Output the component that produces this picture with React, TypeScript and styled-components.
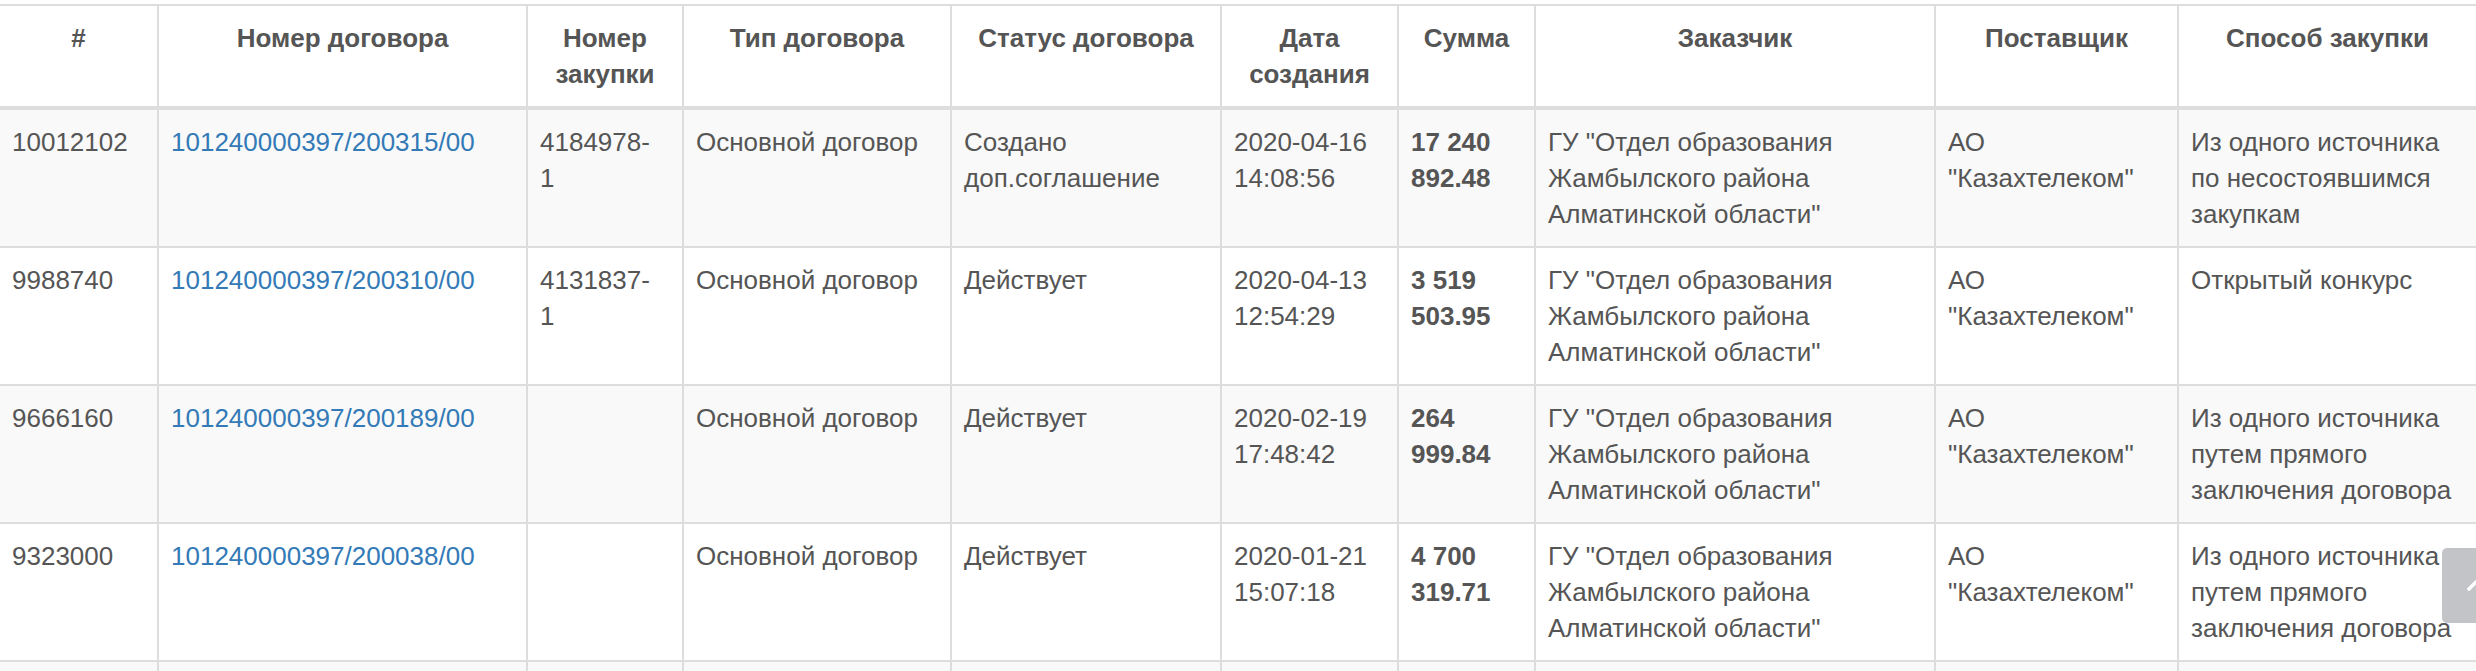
import { FC } from 'react';
import styled, { createGlobalStyle } from 'styled-components';

interface IContract {
  id: string;
  number: string;
  purchase: string;
  type: string;
  status: string;
  created: string;
  sum: string;
  customer: string;
  supplier: string;
  method: string;
}

interface IColumn {
  title: string;
  width: number;
}

const COLUMNS: IColumn[] = [
  { title: '#', width: 158 },
  { title: 'Номер договора', width: 369 },
  { title: 'Номер закупки', width: 156 },
  { title: 'Тип договора', width: 268 },
  { title: 'Статус договора', width: 270 },
  { title: 'Дата создания', width: 177 },
  { title: 'Сумма', width: 137 },
  { title: 'Заказчик', width: 400 },
  { title: 'Поставщик', width: 243 },
  { title: 'Способ закупки', width: 298 },
];

const CUSTOMER = 'ГУ "Отдел образования Жамбылского района Алматинской области"';
const SUPPLIER = 'АО "Казахтелеком"';

const CONTRACTS: IContract[] = [
  {
    id: '10012102',
    number: '101240000397/200315/00',
    purchase: '4184978-1',
    type: 'Основной договор',
    status: 'Создано доп.соглашение',
    created: '2020-04-16 14:08:56',
    sum: '17 240 892.48',
    customer: CUSTOMER,
    supplier: SUPPLIER,
    method: 'Из одного источника по несостоявшимся закупкам',
  },
  {
    id: '9988740',
    number: '101240000397/200310/00',
    purchase: '4131837-1',
    type: 'Основной договор',
    status: 'Действует',
    created: '2020-04-13 12:54:29',
    sum: '3 519 503.95',
    customer: CUSTOMER,
    supplier: SUPPLIER,
    method: 'Открытый конкурс',
  },
  {
    id: '9666160',
    number: '101240000397/200189/00',
    purchase: '',
    type: 'Основной договор',
    status: 'Действует',
    created: '2020-02-19 17:48:42',
    sum: '264 999.84',
    customer: CUSTOMER,
    supplier: SUPPLIER,
    method: 'Из одного источника путем прямого заключения договора',
  },
  {
    id: '9323000',
    number: '101240000397/200038/00',
    purchase: '',
    type: 'Основной договор',
    status: 'Действует',
    created: '2020-01-21 15:07:18',
    sum: '4 700 319.71',
    customer: CUSTOMER,
    supplier: SUPPLIER,
    method: 'Из одного источника путем прямого заключения договора',
  },
];

const ContractsTable: FC = () => {
  return (
    <>
      <GlobalStyle />
      <Page>
        <Table>
          <colgroup>
            {COLUMNS.map(col => (
              <Col key={col.title} $width={col.width} />
            ))}
          </colgroup>
          <thead>
            <tr>
              {COLUMNS.map(col => (
                <HeadCell key={col.title}>{col.title}</HeadCell>
              ))}
            </tr>
          </thead>
          <tbody>
            {CONTRACTS.map(contract => (
              <Row key={contract.id}>
                <Cell>{contract.id}</Cell>
                <Cell>
                  <ContractLink href="#">{contract.number}</ContractLink>
                </Cell>
                <Cell $padRight={20}>{contract.purchase}</Cell>
                <Cell>{contract.type}</Cell>
                <Cell>{contract.status}</Cell>
                <Cell>{contract.created}</Cell>
                <SumCell>{contract.sum}</SumCell>
                <Cell>{contract.customer}</Cell>
                <Cell>{contract.supplier}</Cell>
                <Cell>{contract.method}</Cell>
              </Row>
            ))}
            <Row>
              {COLUMNS.map(col => (
                <Cell key={col.title} />
              ))}
            </Row>
          </tbody>
        </Table>
      </Page>

      <ScrollTopButton type="button" aria-label="Наверх">
        <svg width="26" height="16" viewBox="0 0 26 16">
          <polyline
            points="2,14 13,3 24,14"
            fill="none"
            stroke="#fff"
            strokeWidth="3.5"
            strokeLinecap="square"
          />
        </svg>
      </ScrollTopButton>
    </>
  );
};

export default ContractsTable;

const GlobalStyle = createGlobalStyle`
  html, body {
    margin: 0;
    padding: 0;
    overflow: hidden;
    background: #fff;
  }

  body {
    font-family: 'Liberation Sans', Arial, sans-serif;
    font-size: 26px;
    line-height: 36px;
    color: #555;
  }
`;

const Page = styled.div`
  width: 2476px;
  padding-top: 4px;
`;

const Table = styled.table`
  width: 2476px;
  table-layout: fixed;
  border-collapse: collapse;
  border-spacing: 0;
`;

const Col = styled.col<{ $width: number }>`
  width: ${({ $width }) => $width}px;
`;

const HeadCell = styled.th`
  padding: 14px 12px;
  text-align: center;
  vertical-align: top;
  font-weight: 700;
  color: #555;
  border: 2px solid #ddd;
  border-bottom-width: 4px;

  &:first-child {
    border-left: none;
  }

  &:last-child {
    border-right: none;
  }
`;

const Row = styled.tr`
  &:nth-child(odd) {
    background: #f9f9f9;
  }
`;

const Cell = styled.td<{ $padRight?: number }>`
  padding: 14px ${({ $padRight }) => $padRight ?? 12}px 14px 12px;
  vertical-align: top;
  text-align: left;
  border: 2px solid #ddd;

  &:first-child {
    border-left: none;
  }

  &:last-child {
    border-right: none;
  }
`;

const SumCell = styled(Cell)`
  font-weight: 700;
`;

const ContractLink = styled.a`
  color: #337ab7;
  text-decoration: none;
`;

const ScrollTopButton = styled.button`
  position: fixed;
  left: 2442px;
  top: 548px;
  width: 75px;
  height: 75px;
  padding: 0 0 6px;
  display: flex;
  align-items: center;
  justify-content: center;
  border: none;
  border-radius: 5px;
  background: #c3c4c8;
  cursor: pointer;
`;
